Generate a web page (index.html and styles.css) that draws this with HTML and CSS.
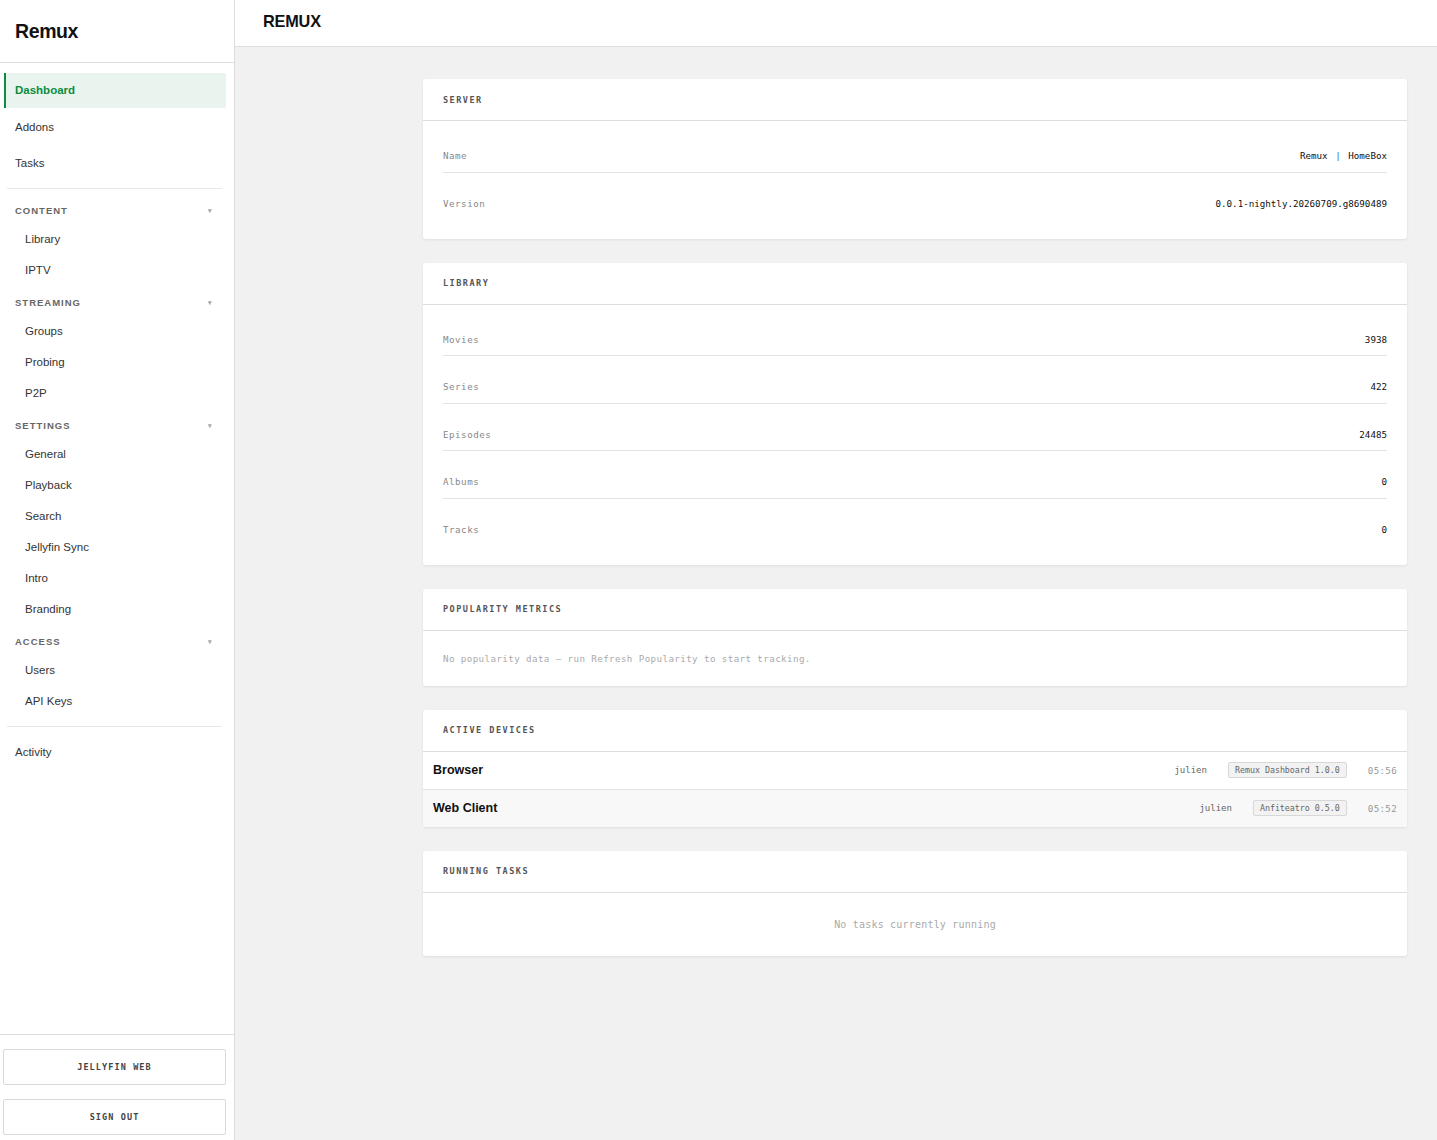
FILE: index.html
```html
<!DOCTYPE html>
<html>
<head>
    <meta charset="UTF-8">
    <link rel="stylesheet" href="styles.css">
</head>
<body>
    <div class="app">
        <aside class="sidebar">
            <div class="logo">Remux</div>

            <nav class="nav">
                <a class="nav-item active">Dashboard</a>
                <a class="nav-item">Addons</a>
                <a class="nav-item">Tasks</a>

                <div class="nav-divider"></div>

                <div class="nav-group">
                    <div class="group-title">Content <span class="caret">▾</span></div>
                    <a class="sub-item">Library</a>
                    <a class="sub-item">IPTV</a>
                </div>

                <div class="nav-group">
                    <div class="group-title">Streaming <span class="caret">▾</span></div>
                    <a class="sub-item">Groups</a>
                    <a class="sub-item">Probing</a>
                    <a class="sub-item">P2P</a>
                </div>

                <div class="nav-group">
                    <div class="group-title">Settings <span class="caret">▾</span></div>
                    <a class="sub-item">General</a>
                    <a class="sub-item">Playback</a>
                    <a class="sub-item">Search</a>
                    <a class="sub-item">Jellyfin Sync</a>
                    <a class="sub-item">Intro</a>
                    <a class="sub-item">Branding</a>
                </div>

                <div class="nav-group">
                    <div class="group-title">Access <span class="caret">▾</span></div>
                    <a class="sub-item">Users</a>
                    <a class="sub-item">API Keys</a>
                </div>

                <div class="nav-divider lower"></div>

                <a class="nav-item activity">Activity</a>
            </nav>

            <div class="sidebar-footer">
                <button class="side-btn">Jellyfin Web</button>
                <button class="side-btn">Sign Out</button>
            </div>
        </aside>

        <main class="main">
            <header class="topbar">REMUX</header>

            <div class="content">
                <div class="cards">
                    <!-- Server -->
                    <section class="card">
                        <div class="card-header">Server</div>
                        <div class="card-body rows">
                            <div class="row">
                                <span class="label">Name</span>
                                <span class="value">Remux <span class="sep">|</span> HomeBox</span>
                            </div>
                            <div class="row">
                                <span class="label">Version</span>
                                <span class="value">0.0.1-nightly.20260709.g8690489</span>
                            </div>
                        </div>
                    </section>

                    <!-- Library -->
                    <section class="card">
                        <div class="card-header">Library</div>
                        <div class="card-body rows">
                            <div class="row"><span class="label">Movies</span><span class="value">3938</span></div>
                            <div class="row"><span class="label">Series</span><span class="value">422</span></div>
                            <div class="row"><span class="label">Episodes</span><span class="value">24485</span></div>
                            <div class="row"><span class="label">Albums</span><span class="value">0</span></div>
                            <div class="row"><span class="label">Tracks</span><span class="value">0</span></div>
                        </div>
                    </section>

                    <!-- Popularity -->
                    <section class="card">
                        <div class="card-header">Popularity Metrics</div>
                        <div class="card-body empty-note">No popularity data — run Refresh Popularity to start tracking.</div>
                    </section>

                    <!-- Active devices -->
                    <section class="card">
                        <div class="card-header">Active Devices</div>
                        <div class="devices">
                            <div class="device">
                                <span class="device-name">Browser</span>
                                <span class="device-user">julien</span>
                                <span class="device-client">Remux Dashboard 1.0.0</span>
                                <span class="device-time">05:56</span>
                            </div>
                            <div class="device">
                                <span class="device-name">Web Client</span>
                                <span class="device-user">julien</span>
                                <span class="device-client">Anfiteatro 0.5.0</span>
                                <span class="device-time">05:52</span>
                            </div>
                        </div>
                    </section>

                    <!-- Running tasks -->
                    <section class="card">
                        <div class="card-header">Running Tasks</div>
                        <div class="card-body no-tasks">No tasks currently running</div>
                    </section>
                </div>
            </div>
        </main>
    </div>
</body>
</html>
```

FILE: styles.css
```css
* {
    margin: 0;
    padding: 0;
    box-sizing: border-box;
}

body {
    font-family: 'Liberation Sans', Arial, sans-serif;
    background: #f1f1f1;
    color: #222;
}

.app {
    display: flex;
    min-height: 100vh;
}

/* Sidebar */

.sidebar {
    width: 235px;
    flex-shrink: 0;
    background: white;
    border-right: 1px solid #dddddd;
    display: flex;
    flex-direction: column;
    height: 100vh;
}

.logo {
    height: 63px;
    border-bottom: 1px solid #dedede;
    padding-left: 15px;
    display: flex;
    align-items: center;
    font-size: 19.5px;
    font-weight: 700;
    color: #111;
    letter-spacing: -0.4px;
}

.nav {
    padding: 10px 8px 0 4px;
    display: flex;
    flex-direction: column;
}

.nav-item {
    display: block;
    padding: 11px 11px;
    line-height: 14px;
    font-size: 11.5px;
    color: #333;
    cursor: pointer;
}

.nav-item.active {
    background: #eaf4ee;
    border-left: 2px solid #0b8c3f;
    padding-left: 9px;
    padding-top: 10px;
    padding-bottom: 11px;
    color: #0b8c3f;
    font-weight: 700;
    border-radius: 0 2px 2px 0;
}

.nav-item.active + .nav-item {
    margin-top: 1px;
}

.nav-divider {
    height: 1px;
    background: #e8e8e8;
    margin: 7px 4px 5px 3px;
}

.nav-divider.lower {
    margin: 9px 4px 7px 3px;
}

.nav-group {
    margin-top: 3px;
}

.group-title {
    display: flex;
    justify-content: space-between;
    align-items: center;
    padding: 7px 14px 7px 11px;
    line-height: 13px;
    font-size: 9.5px;
    font-weight: 700;
    text-transform: uppercase;
    letter-spacing: 1px;
    color: #666;
}

.caret {
    font-size: 7px;
    color: #aaa;
    letter-spacing: 0;
}

.sub-item {
    display: block;
    padding: 8px 0 8px 21px;
    line-height: 15px;
    font-size: 11.5px;
    color: #333;
    cursor: pointer;
}

.sidebar-footer {
    margin-top: auto;
    border-top: 1px solid #dddddd;
    padding: 14px 8px 5px 3px;
    display: flex;
    flex-direction: column;
    gap: 14px;
}

.side-btn {
    height: 36px;
    background: white;
    border: 1px solid #d9d9d9;
    border-radius: 2px;
    font-family: 'DejaVu Sans Mono', 'Liberation Mono', monospace;
    font-size: 8.5px;
    font-weight: 700;
    letter-spacing: 1.1px;
    text-transform: uppercase;
    color: #444;
    cursor: pointer;
}

/* Main */

.main {
    flex: 1;
    display: flex;
    flex-direction: column;
}

.topbar {
    height: 47px;
    background: white;
    border-bottom: 1px solid #dddddd;
    padding: 0 28px 4px;
    display: flex;
    align-items: center;
    font-size: 16.3px;
    font-weight: 700;
    color: #111;
    letter-spacing: -0.2px;
}

.content {
    padding: 32px 30px 40px 188px;
}

.cards {
    display: flex;
    flex-direction: column;
    gap: 24px;
}

.card {
    background: white;
    border-radius: 3px;
    box-shadow: 0 1px 3px rgba(0, 0, 0, 0.08);
}

.card-header {
    height: 42px;
    border-bottom: 1px solid #dddddd;
    padding: 0 20px;
    display: flex;
    align-items: center;
    font-family: 'DejaVu Sans Mono', 'Liberation Mono', monospace;
    font-size: 8.5px;
    font-weight: 700;
    letter-spacing: 1.5px;
    text-transform: uppercase;
    color: #555;
}

.card-body {
    padding: 0 20px;
    font-family: 'DejaVu Sans Mono', 'Liberation Mono', monospace;
}

.rows {
    padding: 4px 20px 19.5px;
}

.row {
    display: flex;
    justify-content: space-between;
    padding: 25px 0 9.5px;
    line-height: 12px;
    border-bottom: 1px solid #e3e3e3;
}

.row:last-child {
    border-bottom: none;
}

.label {
    font-size: 9.2px;
    letter-spacing: 0.5px;
    color: #888;
}

.value {
    font-size: 9.2px;
    color: #111;
}

.sep {
    color: #2f6fd6;
    margin: 0 2px;
}

.empty-note {
    padding: 22px 20px 21px;
    line-height: 12px;
    font-size: 9.2px;
    letter-spacing: 0.4px;
    color: #aaa;
}

.no-tasks {
    padding: 25px 20px 25px;
    line-height: 13px;
    text-align: center;
    font-size: 10px;
    letter-spacing: 0.2px;
    color: #aaa;
}

/* Devices */

.device {
    display: flex;
    align-items: center;
    gap: 21px;
    height: 37px;
    padding: 0 10px;
}

.device:first-child {
    height: 38px;
    border-bottom: 1px solid #e3e3e3;
}

.device:nth-child(even) {
    background: #f8f8f8;
}

.device-name {
    flex: 1;
    font-size: 12.5px;
    font-weight: 700;
    color: #111;
}

.device-user,
.device-client,
.device-time {
    font-family: 'DejaVu Sans Mono', 'Liberation Mono', monospace;
}

.device-user {
    font-size: 9px;
    color: #666;
}

.device-client {
    font-size: 8.3px;
    color: #666;
    background: #f2f2f2;
    border: 1px solid #d8d8d8;
    border-radius: 2px;
    padding: 0 6px;
    line-height: 14px;
}

.device-time {
    font-size: 9.2px;
    letter-spacing: 0.3px;
    color: #999;
}
```
